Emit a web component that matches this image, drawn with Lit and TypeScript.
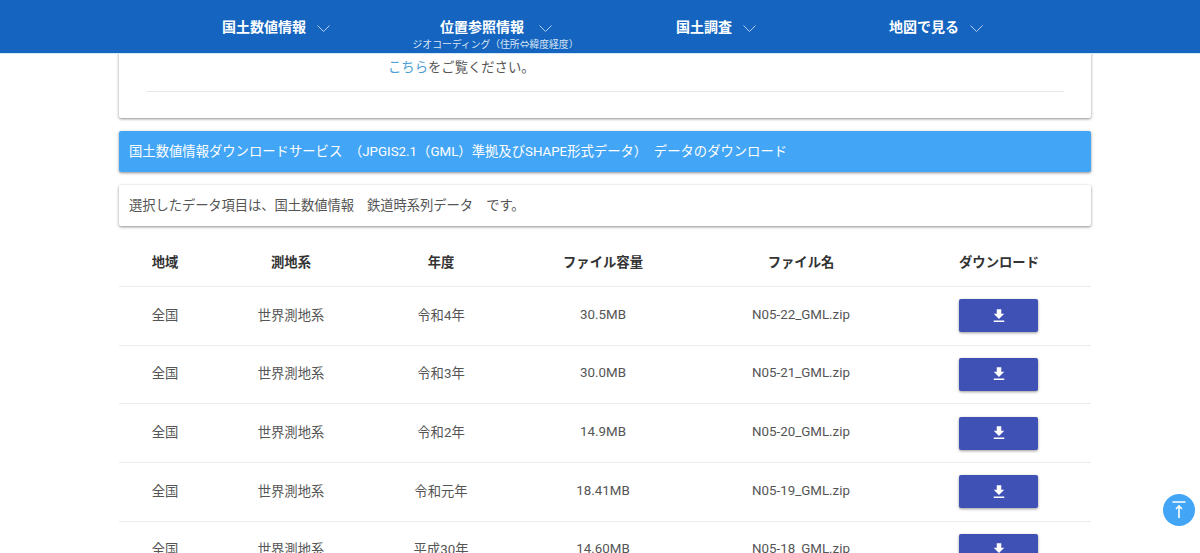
import { LitElement, html, css, svg } from "lit";
import { customElement } from "lit/decorators.js";

const rows = [
  ["全国", "世界測地系", "令和4年", "30.5MB", "N05-22_GML.zip"],
  ["全国", "世界測地系", "令和3年", "30.0MB", "N05-21_GML.zip"],
  ["全国", "世界測地系", "令和2年", "14.9MB", "N05-20_GML.zip"],
  ["全国", "世界測地系", "令和元年", "18.41MB", "N05-19_GML.zip"],
  ["全国", "世界測地系", "平成30年", "14.60MB", "N05-18_GML.zip"],
];
const heads = ["地域", "測地系", "年度", "ファイル容量", "ファイル名", "ダウンロード"];
const widths = [92, 160, 140, 184, 212, 184];
const nav = [
  { label: "国土数値情報" },
  { label: "位置参照情報", sub: "ジオコーディング（住所⇔緯度経度）" },
  { label: "国土調査" },
  { label: "地図で見る" },
];
const chevron = svg`<path d="M0.5 0.5 L6.5 6.5 L12.5 0.5" fill="none" stroke="#b4cfee" stroke-width="1"/>`;

@customElement("app-root")
export class AppRoot extends LitElement {
  static styles = css`
    :host {
      display: block;
      position: relative;
      height: 553px;
      overflow: hidden;
      background: #fff;
      font-family: Roboto, "Noto Sans CJK JP", sans-serif;
      color: #555;
      font-size: 13.33px;
    }
    header {
      position: absolute;
      top: 0;
      left: 0;
      right: 0;
      height: 53px;
      background: #1565c0;
      border-bottom: 1px solid #d3e8f8;
      display: flex;
      padding-left: 166px;
      z-index: 2;
    }
    .item {
      width: 220px;
      display: flex;
      flex-direction: column;
      align-items: center;
      padding-top: 17px;
      color: #fff;
    }
    .top {
      display: flex;
      align-items: center;
      gap: 11px;
      height: 20px;
      font-size: 14px;
      font-weight: 700;
      line-height: 20px;
    }
    .top.wide {
      gap: 15px;
    }
    .top svg {
      width: 13px;
      height: 7px;
      margin-top: 2px;
    }
    .sub {
      font-size: 9.8px;
      line-height: 14px;
      margin-top: 1px;
      margin-right: 1px;
      color: #dbe6f5;
      white-space: nowrap;
    }
    main {
      width: 972px;
      margin-left: 119px;
      display: flex;
      flex-direction: column;
    }
    .card {
      background: #fff;
      box-shadow: 0 1px 3px rgba(0, 0, 0, 0.45);
      border-radius: 2px;
    }
    .intro {
      height: 118px;
      padding: 58px 27px 0;
      box-sizing: border-box;
    }
    .intro p {
      margin: 0;
      padding-left: 243px;
      height: 34px;
      line-height: 19px;
      box-sizing: border-box;
      border-bottom: 1px solid #e8e8e8;
      color: #555;
      text-indent: -1px;
    }
    .intro a {
      color: #4b9fd5;
      text-decoration: none;
    }
    .bar {
      height: 41px;
      box-sizing: border-box;
      margin-top: 13px;
      display: flex;
      align-items: center;
      padding: 0 0 2px 10px;
      white-space: pre;
    }
    .bar.blue {
      background: #42a5f5;
      color: #fff;
    }
    .bar.plain {
      letter-spacing: -0.1px;
    }
    table {
      width: 972px;
      table-layout: fixed;
      border-collapse: collapse;
      margin-top: 11px;
    }
    th {
      height: 49px;
      font-size: 13.33px;
      font-weight: 700;
      color: #333;
      padding: 0;
      border-bottom: 1px solid #ececec;
    }
    td {
      height: 58.67px;
      padding: 0 0 3px;
      box-sizing: border-box;
      text-align: center;
      border-bottom: 1px solid #ececec;
    }
    td.action {
      padding: 0;
    }
    .dl {
      width: 79px;
      height: 33px;
      margin-right: 1px;
      border: 0;
      border-radius: 2px;
      background: #3f51b5;
      box-shadow: 0 1px 3px rgba(0, 0, 0, 0.4);
      padding: 0;
      display: inline-flex;
      align-items: center;
      justify-content: center;
      vertical-align: middle;
    }
    .dl svg {
      width: 18px;
      height: 18px;
      fill: #fff;
    }
    .top-btn {
      position: absolute;
      left: 1163px;
      top: 494px;
      width: 32px;
      height: 32px;
      border-radius: 50%;
      background: #42a5f5;
      display: flex;
      align-items: center;
      justify-content: center;
      z-index: 3;
    }
    .top-btn svg {
      width: 16px;
      height: 18px;
    }
  `;

  render() {
    return html`
      <header>
        ${nav.map(
          (n) => html`<div class="item">
            <div class="top ${n.sub ? "wide" : ""}">
              <span>${n.label}</span>
              <svg viewBox="0 0 13 7">${chevron}</svg>
            </div>
            ${n.sub ? html`<div class="sub">${n.sub}</div>` : ""}
          </div>`
        )}
      </header>
      <main>
        <section class="card intro">
          <p><a href="#">こちら</a>をご覧ください。</p>
        </section>
        <div class="card bar blue">国土数値情報ダウンロードサービス　（JPGIS2.1（GML）準拠及びSHAPE形式データ）　データのダウンロード</div>
        <div class="card bar plain">選択したデータ項目は、国土数値情報　鉄道時系列データ　です。</div>
        <table>
          <colgroup>${widths.map((w) => html`<col style="width:${w}px" />`)}</colgroup>
          <thead>
            <tr>${heads.map((h) => html`<th>${h}</th>`)}</tr>
          </thead>
          <tbody>
            ${rows.map(
              (r) => html`<tr>
                ${r.map((c) => html`<td>${c}</td>`)}
                <td class="action">
                  <button class="dl" aria-label="ダウンロード">
                    <svg viewBox="0 0 24 24"><path d="M19 9h-4V3H9v6H5l7 7 7-7zM5 18v2h14v-2H5z"/></svg>
                  </button>
                </td>
              </tr>`
            )}
          </tbody>
        </table>
      </main>
      <div class="top-btn">
        <svg viewBox="0 0 16 18"><path d="M1.5 1 H14.5 M8 17 V5 M5 8 L8 5 L11 8" fill="none" stroke="#fff" stroke-width="1.6"/></svg>
      </div>
    `;
  }
}
